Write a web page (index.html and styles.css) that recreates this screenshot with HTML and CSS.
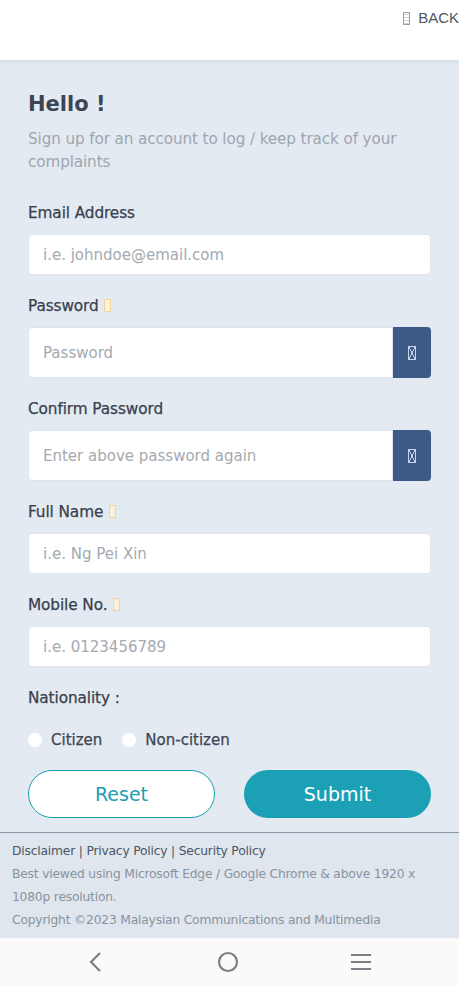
FILE: index.html
```html
<!DOCTYPE html>
<html lang="en">
<head>
  <meta charset="UTF-8">
  <title>Sign Up</title>
  <link rel="stylesheet" href="styles.css">
</head>
<body>
  <div class="topbar">
    <a class="back" href="#"><span class="tofu tofu-grey"></span>BACK</a>
  </div>

  <div class="panel">
    <h1>Hello !</h1>
    <p class="intro">Sign up for an account to log / keep track of your complaints</p>

    <label class="lbl">Email Address</label>
    <input class="field" type="text" placeholder="i.e. johndoe@email.com">

    <label class="lbl">Password <span class="tofu tofu-gold"></span></label>
    <div class="pw-group">
      <input class="field tall" type="password" placeholder="Password">
      <button class="eye" type="button"><span class="tofu tofu-x"></span></button>
    </div>

    <label class="lbl">Confirm Password</label>
    <div class="pw-group">
      <input class="field tall" type="password" placeholder="Enter above password again">
      <button class="eye" type="button"><span class="tofu tofu-x"></span></button>
    </div>

    <label class="lbl">Full Name <span class="tofu tofu-gold"></span></label>
    <input class="field" type="text" placeholder="i.e. Ng Pei Xin">

    <label class="lbl">Mobile No. <span class="tofu tofu-gold"></span></label>
    <input class="field" type="text" placeholder="i.e. 0123456789">

    <label class="lbl">Nationality :</label>
    <div class="radios">
      <label class="radio"><span class="dot"></span>Citizen</label>
      <label class="radio"><span class="dot"></span>Non-citizen</label>
    </div>

    <div class="actions">
      <button class="btn btn-reset" type="button">Reset</button>
      <button class="btn btn-submit" type="button">Submit</button>
    </div>
  </div>

  <div class="footer">
    <div class="links">Disclaimer | Privacy Policy | Security Policy</div>
    <div>Best viewed using Microsoft Edge / Google Chrome &amp; above 1920 x 1080p resolution.</div>
    <div>Copyright ©2023 Malaysian Communications and Multimedia</div>
  </div>

  <div class="sysbar">
    <svg width="20" height="24" viewBox="0 0 20 24"><path d="M14 3 L5 12 L14 21" fill="none" stroke="#7b7f85" stroke-width="2.2"/></svg>
    <svg width="24" height="24" viewBox="0 0 24 24"><circle cx="12" cy="12" r="9" fill="none" stroke="#7b7f85" stroke-width="2.2"/></svg>
    <svg width="24" height="24" viewBox="0 0 24 24"><path d="M2 5 H22 M2 12 H22 M2 19 H22" fill="none" stroke="#7b7f85" stroke-width="2.2"/></svg>
  </div>
</body>
</html>
```

FILE: styles.css
```css
body {
  margin: 0;
  font-family: 'DejaVu Sans', sans-serif;
  background-color: #e4eaf2;
  color: #3e4552;
}
.topbar {
  height: 60px;
  background-color: #ffffff;
  display: flex;
  justify-content: flex-end;
  align-items: flex-start;
}
.back {
  margin-top: 9px;
  font-family: 'Liberation Sans', sans-serif;
  font-size: 15px;
  line-height: 18px;
  color: #505560;
  text-decoration: none;
  display: flex;
  align-items: center;
}
.tofu {
  display: inline-block;
  box-sizing: border-box;
  width: 7px;
  height: 13px;
  vertical-align: -1px;
}
.tofu-grey {
  border: 1px solid #9aa0a6;
  margin-right: 8px;
  background: repeating-linear-gradient(0deg, #d0d3d6 0 1px, transparent 1px 3px);
}
.tofu-gold {
  border: 1px solid #f0d49a;
  background: #fbf0d8;
  margin-left: 1px;
}
.tofu-x {
  width: 8px;
  height: 14px;
  border: 1px solid #c9d5e6;
  background:
    linear-gradient(to top right, transparent 46%, #c9d5e6 48%, #c9d5e6 54%, transparent 56%),
    linear-gradient(to top left, transparent 46%, #c9d5e6 48%, #c9d5e6 54%, transparent 56%);
}
.panel {
  padding: 29px 28px 14px;
  box-shadow: inset 0 4px 4px -2px rgba(0, 0, 0, 0.06);
}
h1 {
  margin: 0;
  font-size: 21px;
  line-height: 30px;
  font-weight: bold;
  color: #3e4552;
}
.intro {
  margin: 9px 0 0;
  font-size: 15.2px;
  line-height: 23px;
  color: #9ea6af;
  letter-spacing: -0.1px;
}
.lbl {
  display: block;
  margin-top: 20px;
  font-size: 15.3px;
  line-height: 22px;
  color: #383f4c;
  letter-spacing: -0.1px;
  -webkit-text-stroke: 0.25px #383f4c;
}
.intro + .lbl {
  margin-top: 28px;
}
.field {
  display: block;
  box-sizing: border-box;
  width: 100%;
  height: 41px;
  margin-top: 10px;
  padding: 0 14px;
  font-family: 'DejaVu Sans', sans-serif;
  font-size: 15px;
  color: #3e4552;
  background: #ffffff;
  border: 1px solid #dfe4ea;
  border-radius: 4px;
  outline: none;
}
.field::placeholder {
  color: #a4aab1;
}
.pw-group {
  display: flex;
  margin-top: 10px;
}
.pw-group .field {
  margin-top: 0;
  flex: 1;
  border-radius: 4px 0 0 4px;
}
.field.tall {
  height: 51px;
}
.eye {
  width: 38px;
  border: none;
  border-radius: 0 4px 4px 0;
  background-color: #3c5a87;
  display: flex;
  align-items: center;
  justify-content: center;
  padding: 0;
}
.radios {
  display: flex;
  gap: 20px;
  margin-top: 20px;
}
.radio {
  display: flex;
  align-items: center;
  font-size: 15px;
  line-height: 22px;
  color: #3e4552;
  -webkit-text-stroke: 0.25px #3e4552;
}
.dot {
  width: 14px;
  height: 14px;
  border-radius: 50%;
  background: #ffffff;
  margin-right: 9px;
}
.actions {
  display: flex;
  justify-content: space-between;
  margin-top: 19px;
}
.btn {
  width: 187px;
  height: 48px;
  border-radius: 24px;
  font-family: 'DejaVu Sans', sans-serif;
  font-size: 19px;
  cursor: pointer;
}
.btn-reset {
  background: #ffffff;
  border: 1px solid #1b9fb2;
  color: #1b9fb2;
}
.btn-submit {
  background: #1ba0b5;
  border: none;
  color: #ffffff;
}
.footer {
  border-top: 1px solid #8a97a8;
  background-color: #dfe6ee;
  padding: 7px 12px 6px;
  font-size: 12.3px;
  line-height: 23px;
  color: #8a939d;
  letter-spacing: -0.2px;
}
.footer .links {
  color: #4d5767;
}
.sysbar {
  height: 48px;
  background: #fafafa;
  display: flex;
  align-items: center;
  padding: 0 86px;
  justify-content: space-between;
}
```
